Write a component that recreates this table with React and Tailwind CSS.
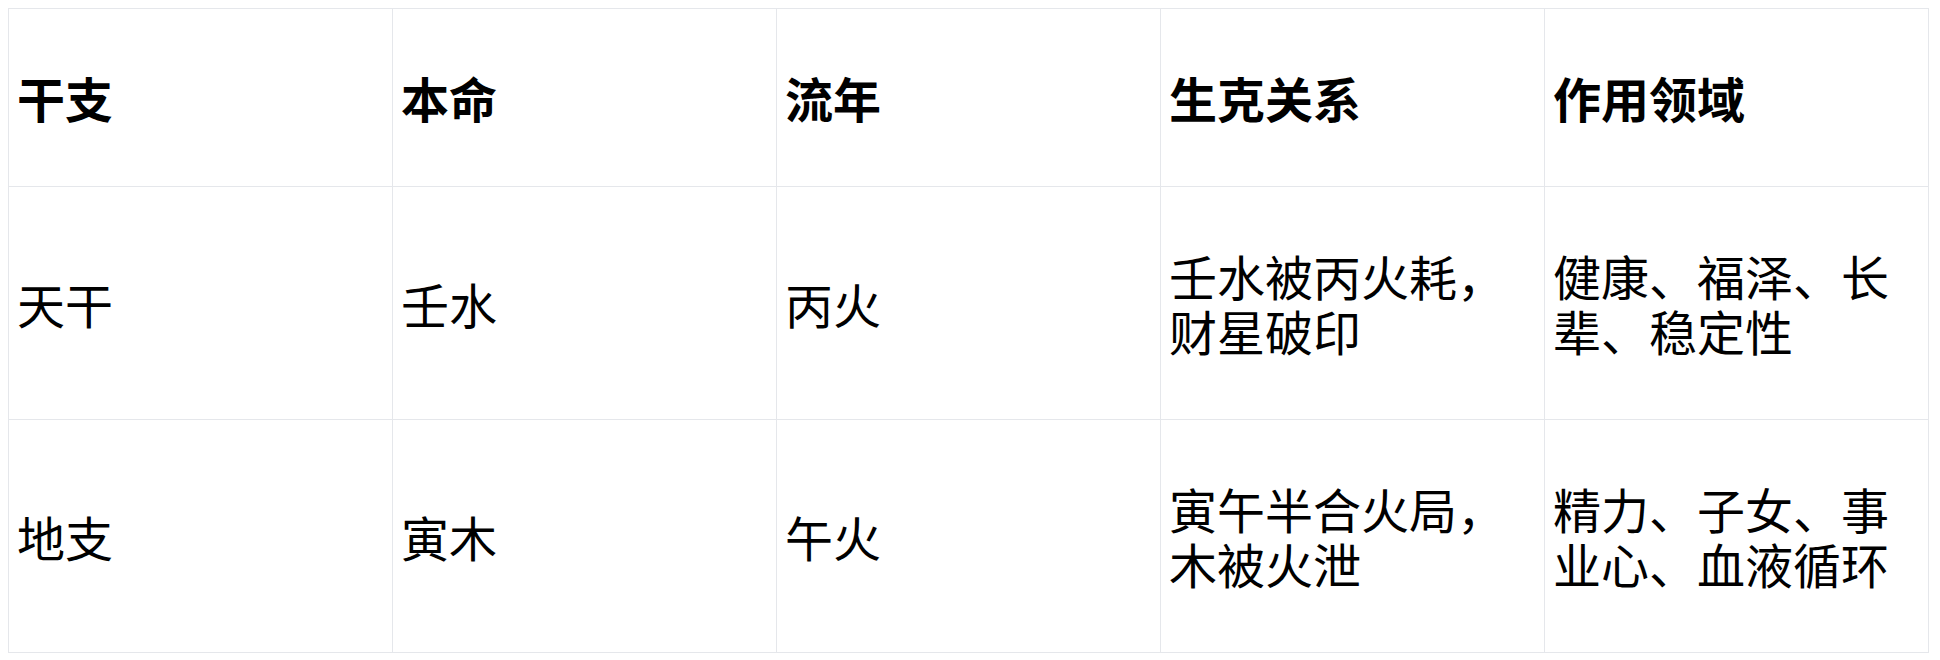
import React from 'react';

const headers = ['干支', '本命', '流年', '生克关系', '作用领域'];

const rows = [
  ['天干', '壬水', '丙火', '壬水被丙火耗，财星破印', '健康、福泽、长辈、稳定性'],
  ['地支', '寅木', '午火', '寅午半合火局，木被火泄', '精力、子女、事业心、血液循环'],
];

export default function App() {
  return (
    <div className="bg-white p-2 font-['Noto_Sans_CJK_SC','Noto_Sans',sans-serif] text-black">
      <table className="w-[1921px] table-fixed border-collapse text-[48px] leading-[55px]">
        <thead>
          <tr>
            {headers.map((h) => (
              <th
                key={h}
                className="border border-[#e5e7eb] px-2 py-[61px] text-left align-middle font-bold"
              >
                {h}
              </th>
            ))}
          </tr>
        </thead>
        <tbody>
          {rows.map((row, i) => (
            <tr key={i}>
              {row.map((cell, j) => (
                <td
                  key={j}
                  className="border border-[#e5e7eb] px-2 py-[61px] text-left align-middle font-normal"
                >
                  {cell}
                </td>
              ))}
            </tr>
          ))}
        </tbody>
      </table>
    </div>
  );
}
